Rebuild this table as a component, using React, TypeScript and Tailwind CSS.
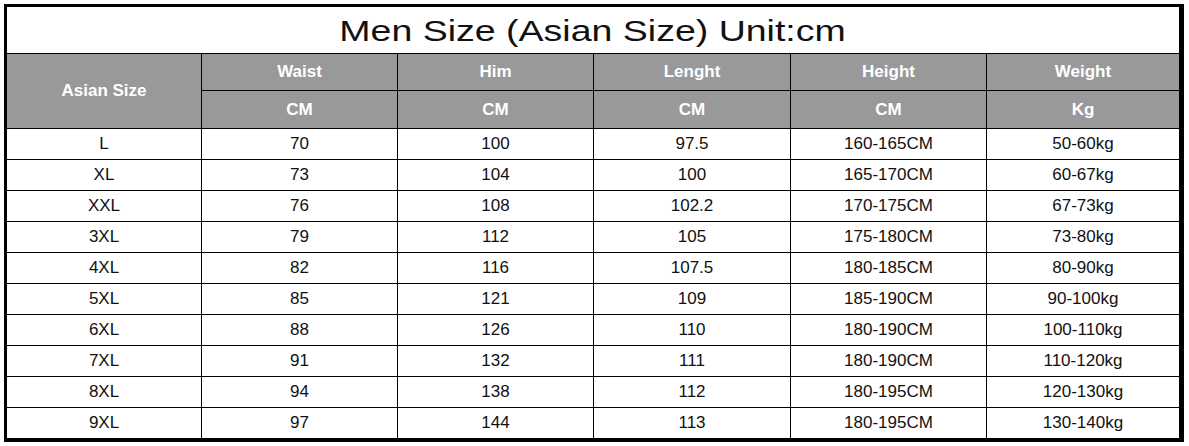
export default function App() {
  const rows: string[][] = [
    ["L", "70", "100", "97.5", "160-165CM", "50-60kg"],
    ["XL", "73", "104", "100", "165-170CM", "60-67kg"],
    ["XXL", "76", "108", "102.2", "170-175CM", "67-73kg"],
    ["3XL", "79", "112", "105", "175-180CM", "73-80kg"],
    ["4XL", "82", "116", "107.5", "180-185CM", "80-90kg"],
    ["5XL", "85", "121", "109", "185-190CM", "90-100kg"],
    ["6XL", "88", "126", "110", "180-190CM", "100-110kg"],
    ["7XL", "91", "132", "111", "180-190CM", "110-120kg"],
    ["8XL", "94", "138", "112", "180-195CM", "120-130kg"],
    ["9XL", "97", "144", "113", "180-195CM", "130-140kg"],
  ];
  const heads = ["Waist", "Him", "Lenght", "Height", "Weight"];
  const units = ["CM", "CM", "CM", "CM", "Kg"];

  return (
    <div
      className="w-[1189px] h-[446px] bg-white pl-1 pt-1"
      style={{ fontFamily: '"Liberation Sans", Arial, sans-serif' }}
    >
      <div className="w-[1180px] border-t-[3px] border-l-[3px] border-r-4 border-b-4 border-black bg-black">
        <div className="grid grid-cols-[194px_195px_195px_196px_195px_192px] grid-rows-[46px_36px_37px_repeat(10,30px)] gap-px">
          {/* Title */}
          <div className="col-span-6 bg-white flex items-center justify-center text-[30px] text-[#111] leading-none">
            <span className="inline-block scale-x-125 pt-0.5">Men Size (Asian Size) Unit:cm</span>
          </div>

          {/* Header */}
          <div className="row-span-2 bg-[#999999] flex items-center justify-center text-white font-bold text-[17px]">
            Asian Size
          </div>
          {heads.map((h) => (
            <div key={h} className="bg-[#999999] flex items-center justify-center text-white font-bold text-[17px]">
              {h}
            </div>
          ))}
          {units.map((u, i) => (
            <div key={i} className="bg-[#999999] flex items-center justify-center text-white font-bold text-[17px]">
              {u}
            </div>
          ))}

          {/* Data */}
          {rows.map((r) =>
            r.map((c, j) => (
              <div key={r[0] + j} className="bg-white flex items-center justify-center text-[#111] text-[17px]">
                {c}
              </div>
            )),
          )}
        </div>
      </div>
    </div>
  );
}
